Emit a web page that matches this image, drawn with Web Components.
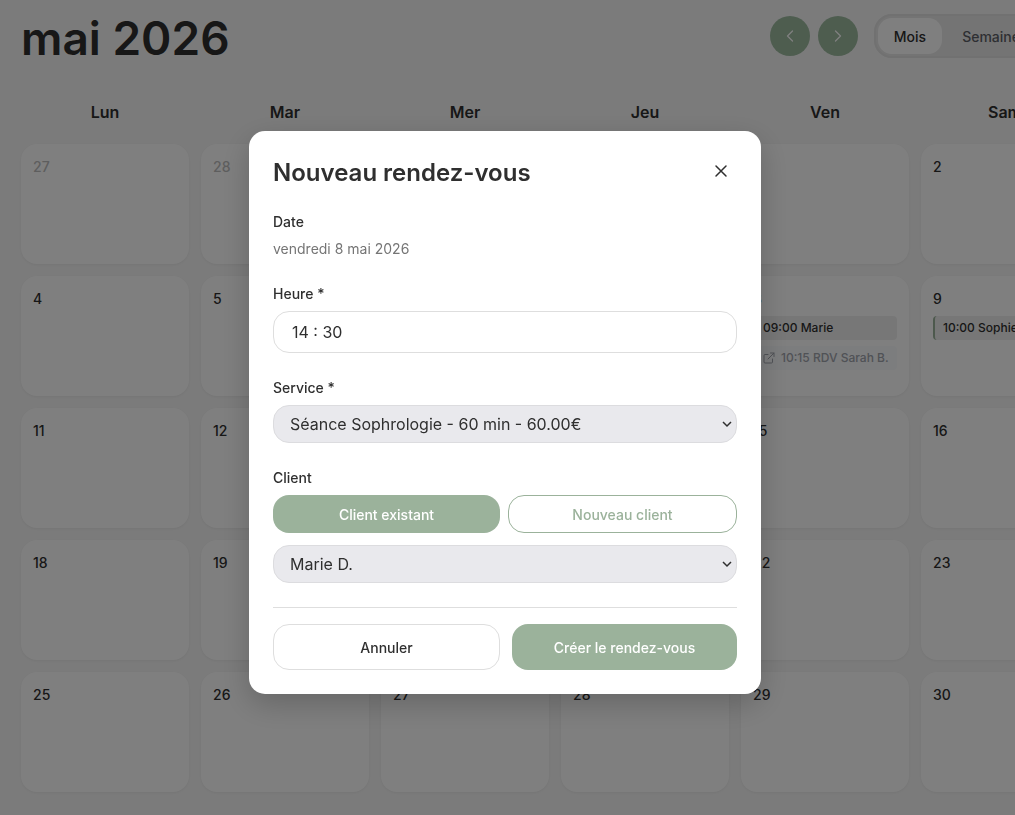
<!DOCTYPE html>
<html lang="fr">
<head>
<meta charset="utf-8">
<title>Calendrier</title>
<style>
html { height: 100%; }
body {
  margin: 0; min-height: 100%; overflow: hidden; background: #f7f7f7; color: #2f2f2f;
  font: 500 14px/20px Inter, "Liberation Sans", sans-serif;
  --green: #9bb29b; --line: #dedede;
}
</style>
</head>
<body>
<calendar-page></calendar-page>
<modal-overlay><booking-dialog></booking-dialog></modal-overlay>

<script>
const define = (name, html, setup) => {
  const template = document.createElement('template');
  template.innerHTML = '<style>*{box-sizing:border-box}button,input,select{font:inherit;color:inherit;margin:0}h1,h2,p{margin:0}</style>' + html;
  customElements.define(name, class extends HTMLElement {
    constructor() {
      super();
      this.attachShadow({ mode: 'open' }).append(template.content.cloneNode(true));
    }
    connectedCallback() {
      if (setup && !this.ready) { this.ready = true; setup(this, this.shadowRoot); }
    }
  });
};

define('round-button', `
<style>
:host { display: block; }
button { display: grid; place-items: center; width: 40px; height: 40px; padding: 0; border: 0; border-radius: 50%; background: #9cba9f; color: #fff; }
</style>
<button type="button"><slot></slot></button>`, (host, root) => {
  root.querySelector('button').setAttribute('aria-label', host.getAttribute('label'));
});

define('view-switch', `
<style>
:host { display: flex; gap: 4px; padding: 4px; border-radius: 18px; background: #e9e9e9; flex: 1; box-shadow: inset 0 0 0 2px #e2e2e2; }
button { height: 36px; padding: 2px 16px 0; border: 0; border-radius: 14px; background: none; color: #5c5f66; }
.on { background: #fff; color: #2f2f2f; }
</style>
<button type="button" class="on" aria-pressed="true">Mois</button>
<button type="button">Semaine</button>`);

define('calendar-header', `
<style>
:host { display: flex; justify-content: space-between; align-items: center; height: 48px; }
h1 { padding-top: 4px; font-size: 46px; line-height: 52px; font-weight: 600; }
.tools { display: flex; align-items: center; flex: 0 0 40%; }
.nav { display: flex; gap: 8px; margin-right: 16px; }
</style>
<h1>mai 2026</h1>
<div class="tools">
  <div class="nav">
    <round-button label="Mois précédent"><svg width="16" height="16" viewBox="0 0 16 16" fill="none" stroke="currentColor" stroke-width="1.3" stroke-linecap="round" stroke-linejoin="round"><path d="M10.500 3 5.500 8l5 5"/></svg></round-button>
    <round-button label="Mois suivant"><svg width="16" height="16" viewBox="0 0 16 16" fill="none" stroke="currentColor" stroke-width="1.3" stroke-linecap="round" stroke-linejoin="round"><path d="m5.500 3 5 5-5 5"/></svg></round-button>
  </div>
  <view-switch></view-switch>
</div>`);

define('calendar-event', `
<style>
:host { display: flex; align-items: center; gap: 6px; height: 24px; padding: 0 8px; border-left: 2px solid var(--green); border-radius: 4px; background: #efefef; font-size: 12px; white-space: nowrap; }
:host([external]) { border-color: #e6ebf2; background: #f9fafc; color: #a0a4ad; }
svg { display: none; }
:host([external]) svg { display: block; }
</style>
<svg width="12" height="12" viewBox="0 0 12 12" fill="none" stroke="currentColor" stroke-linecap="round" stroke-linejoin="round"><path d="M5 2.500H2a1 1 0 0 0-1 1V10a1 1 0 0 0 1 1h6.500a1 1 0 0 0 1-1V7M7.500 1H11v3.500M11 1 5 7"/></svg>
<slot></slot>`);

define('calendar-day', `
<style>
:host { display: flex; flex-direction: column; gap: 7px; height: 120px; padding: 13px 12px 12px; box-sizing: border-box; border-radius: 16px; background: #fff; box-shadow: 0 1px 3px rgba(0,0,0,.06); }
:host([outside]) .number { color: #bdbdbd; }
.events { display: flex; flex-direction: column; gap: 6px; }
</style>
<div class="number"></div>
<div class="events"><slot></slot></div>`, (host, root) => {
  root.querySelector('.number').textContent = host.getAttribute('number');
});

define('month-grid', `
<style>
:host { display: grid; grid-template-columns: repeat(7, minmax(168px, 1fr)); gap: 12px; }
.name { padding-bottom: 8px; font-size: 16px; line-height: 24px; font-weight: 600; text-align: center; }
</style>`, (host, root) => {
  for (const name of ['Lun', 'Mar', 'Mer', 'Jeu', 'Ven', 'Sam', 'Dim']) {
    const cell = document.createElement('div');
    cell.className = 'name';
    cell.textContent = name;
    root.append(cell);
  }
  const events = {
    8: [['09:00 Marie'], ['10:15 RDV Sarah B.', true]],
    9: [['10:00 Sophie']]
  };
  for (let i = -3; i <= 31; i++) {
    const day = document.createElement('calendar-day');
    day.setAttribute('number', i < 1 ? i + 30 : i);
    day.toggleAttribute('outside', i < 1);
    for (const [text, external] of events[i] || []) {
      const item = document.createElement('calendar-event');
      item.toggleAttribute('external', !!external);
      item.textContent = text;
      day.append(item);
    }
    root.append(day);
  }
});

define('calendar-page', `
<style>
:host { display: flex; flex-direction: column; gap: 40px; width: max-content; min-width: 100%; padding: 12px 21px; box-sizing: border-box; }
</style>
<calendar-header></calendar-header>
<month-grid></month-grid>`);

define('modal-overlay', `
<style>
:host { position: fixed; inset: 0; display: grid; place-items: center; padding: 10px 5px 0 0; box-sizing: border-box; background: rgba(0,0,0,.5); }
</style>
<slot></slot>`);

define('form-field', `
<style>
:host { display: flex; flex-direction: column; gap: 6px; line-height: 22px; }
</style>
<slot></slot>`);

define('booking-dialog', `
<style>
:host { display: block; width: 100%; max-width: 512px; padding: 24px; box-sizing: border-box; border-radius: 16px; background: #fff; box-shadow: 0 10px 30px rgba(0,0,0,.2); }
form { display: flex; flex-direction: column; gap: 24px; }
header { display: flex; justify-content: space-between; align-items: center; height: 32px; }
h2 { padding-top: 4px; font-size: 24px; line-height: 36px; font-weight: 600; }
.close { display: grid; place-items: center; width: 32px; height: 32px; padding: 0; border: 0; background: none; }
.date { color: #757575; font-weight: 400; line-height: 20px; }
input { width: 100%; height: 42px; padding: 0 18px; border: 1px solid var(--line); border-radius: 16px; background: #fff; font-size: 16px; font-weight: 400; }
.select { position: relative; display: flex; }
select { appearance: none; width: 100%; height: 38px; padding: 0 16px; border: 1px solid #dcdcdf; border-radius: 16px; background: #e9e9ed; font-size: 16px; font-weight: 400; }
.select svg { position: absolute; right: 5px; top: 50%; translate: 0 -50%; pointer-events: none; }
.client { display: flex; flex-direction: column; gap: 12px; }
.row { display: flex; gap: 8px; }
.row button, footer button { flex: 1 1 0; height: 38px; padding: 2px 16px 0; border: 0; border-radius: 16px; background: #fff; }
.row .plain { border: 1px solid var(--green); color: var(--green); }
.row .solid, footer .solid { background: var(--green); color: #fff; }
footer { display: flex; gap: 12px; padding-top: 16px; border-top: 1px solid var(--line); }
footer button { height: 46px; }
footer .plain { border: 1px solid var(--line); }
</style>
<form role="dialog" aria-labelledby="title">
  <header>
    <h2 id="title">Nouveau rendez-vous</h2>
    <button type="button" class="close" aria-label="Fermer"><svg width="14" height="14" viewBox="0 0 14 14" fill="none" stroke="currentColor" stroke-width="1.500" stroke-linecap="round"><path d="m2 2 10 10M12 2 2 12"/></svg></button>
  </header>
  <form-field><div>Date</div><p class="date">vendredi 8 mai 2026</p></form-field>
  <form-field><label for="time">Heure *</label><input id="time" type="text" inputmode="numeric" value="14 : 30"></form-field>
  <form-field><label for="service">Service *</label>
    <div class="select"><select id="service"><option>Séance Sophrologie - 60 min - 60.00€</option></select><svg width="10" height="8" viewBox="0 0 10 8" fill="none" stroke="currentColor" stroke-width="1.500"><path d="m1 2 4 4 4-4"/></svg></div>
  </form-field>
  <form-field><label for="client">Client</label>
    <div class="client">
      <div class="row"><button type="button" class="solid">Client existant</button><button type="button" class="plain">Nouveau client</button></div>
      <div class="select"><select id="client"><option>Marie D.</option></select><svg width="10" height="8" viewBox="0 0 10 8" fill="none" stroke="currentColor" stroke-width="1.500"><path d="m1 2 4 4 4-4"/></svg></div>
    </div>
  </form-field>
  <footer><button type="button" class="plain">Annuler</button><button type="submit" class="solid">Créer le rendez-vous</button></footer>
</form>`);
</script>
</body>
</html>
